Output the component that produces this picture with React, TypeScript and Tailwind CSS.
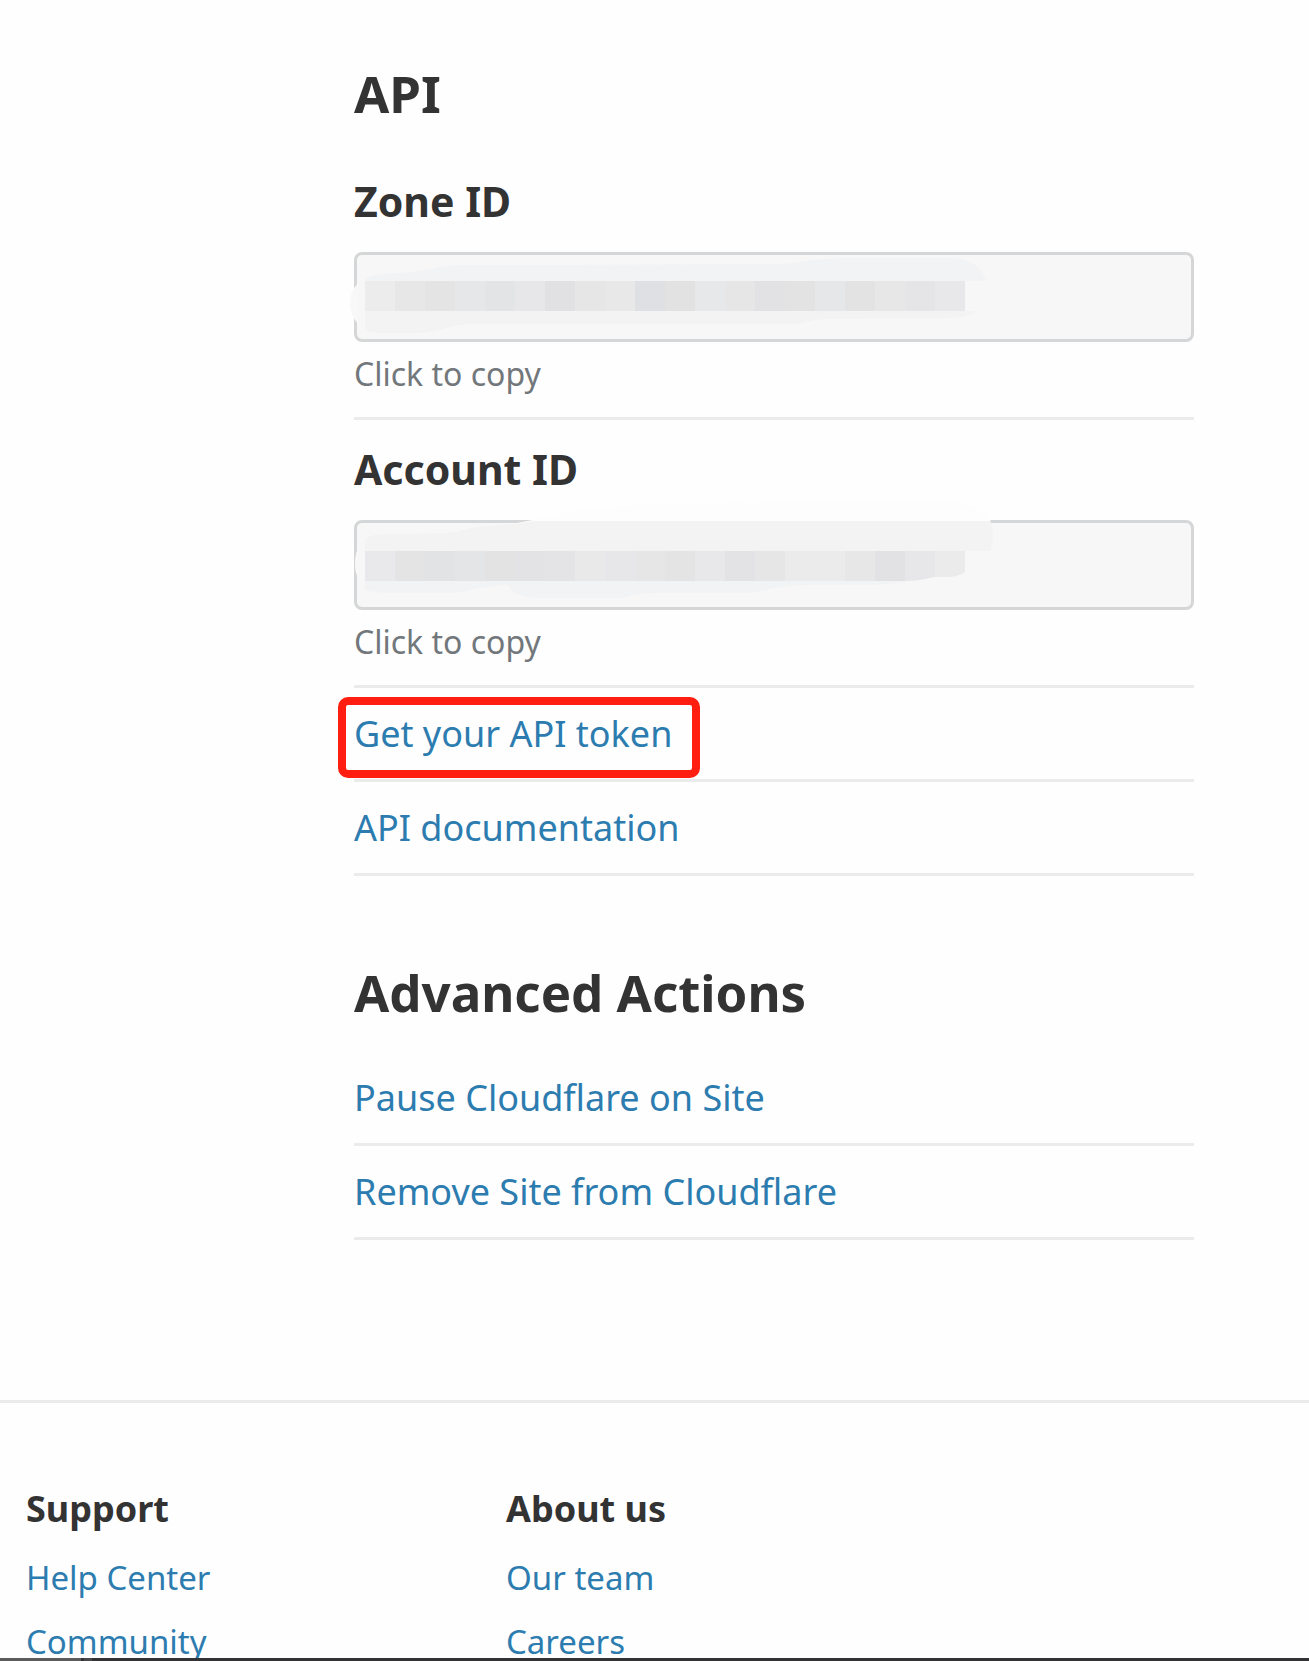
import React from "react";

const CELL = 30;

const zoneCells = [
  "#ececec", "#e7e7e7", "#e4e4e4", "#e5e7e9", "#e3e4e6", "#e7e7e9", "#e1e1e4", "#e6e6e6", "#e8e8e8", "#dfe0e3",
  "#e2e2e2", "#e6e8ea", "#e6e6e6", "#e2e2e5", "#e3e3e3", "#e5e7e9", "#e3e3e3", "#e7e7e7", "#e5e5e8", "#e8e8ea",
];

const accountCells = [
  "#e9e9eb", "#e4e4e4", "#e2e3e5", "#e3e5e7", "#e3e3e3", "#e3e3e6", "#e4e4e7", "#e9e9e9", "#e7e7e9", "#e6e6e6",
  "#e4e4e4", "#e8e8ea", "#e3e3e6", "#e6e6e6", "#ebebeb", "#ebebeb", "#e7e7e7", "#e2e2e5", "#e7e7ea", "#ebebeb",
];

function Cells({ colors, y }: { colors: string[]; y: number }) {
  return (
    <>
      {colors.map((c, i) => (
        <rect key={i} x={11 + i * CELL} y={y} width={CELL} height={CELL} fill={c} />
      ))}
    </>
  );
}

function ZoneMosaic() {
  return (
    <svg className="pointer-events-none absolute inset-0 h-full w-full overflow-visible" aria-hidden="true">
      <path d="M4 31 Q-4 40 -4 51 Q-4 63 4 72 Z" fill="#f8f8f8" />
      <path d="M11 29 V26 Q20 22 45 21 Q70 19 85 15 Q95 13 115 13 L430 12 Q460 7 490 6 H600 Q626 8 632 29 Z" fill="#f2f3f5" />
      <path d="M11 59 V78 Q14 81 30 81 H63 Q80 80 93 76 Q105 72 119 72 H443 Q460 67 479 67 L600 66 Q615 65 623 59 Z" fill="#f3f3f3" />
      <Cells colors={zoneCells} y={29} />
    </svg>
  );
}

function AccountMosaic() {
  return (
    <svg className="pointer-events-none absolute inset-0 h-full w-full overflow-visible" aria-hidden="true">
      <defs>
        <clipPath id="account-cells">
          <path d="M11 31 H611 V52 Q604 57 593 57 H580 Q565 61 553 61 H11 Z" />
        </clipPath>
      </defs>
      <path d="M4 28 Q1 35 1 44 Q1 52 4 58 Z" fill="#f8f8f8" />
      <path d="M163 3 Q185 -1 199 -4 Q225 -12 259 -13 Q310 -17 353 -17 L426 -18 H599 Q632 -13 637 2 Z" fill="#fdfdfd" />
      <path d="M11 31 V20 Q16 14 30 14 Q80 14 102 12 Q118 7 132 6 Q155 5 180 1 H636 Q642 15 636 31 Z" fill="#f3f3f3" />
      <path d="M11 61 V70 Q20 73 40 73 H102 Q130 66 154 65 Q160 77 180 78 H269 Q285 73 302 73 H396 Q426 66 452 65 H519 Q540 64 553 61 Z" fill="#f2f3f5" />
      <g clipPath="url(#account-cells)">
        <Cells colors={accountCells} y={31} />
      </g>
    </svg>
  );
}

function IdField({ id, label, mosaic }: { id: string; label: string; mosaic: React.ReactNode }) {
  return (
    <div className="border-b-3 border-[#ebebeb] pb-[21px]">
      <label htmlFor={id} className="block text-[41px] leading-[52px] font-bold">
        {label}
      </label>
      <div className="relative mt-[25px]">
        <input
          id={id}
          type="text"
          readOnly
          className="block h-[90px] w-full rounded-lg border-3 border-[#d5d6d7] bg-[#f7f7f7] px-3 outline-none"
        />
        {mosaic}
      </div>
      <button type="button" className="mt-[10px] block text-[32px] leading-[44px] text-[#72777b]">
        Click to copy
      </button>
    </div>
  );
}

function ActionLink({ children, marked = false }: { children: string; marked?: boolean }) {
  return (
    <li className="relative border-b-3 border-[#ebebeb] pt-5 pb-[19px]">
      <a href="#" className="block text-[36px] leading-[52px] text-[#2c7cb0]">
        {children}
      </a>
      {marked && (
        <span className="pointer-events-none absolute top-[9px] -left-4 h-[81px] w-[362px] rounded-[10px] border-8 border-[#ff1e10]" />
      )}
    </li>
  );
}

function FooterColumn({ title, links }: { title: string; links: string[] }) {
  return (
    <nav aria-label={title} className="w-[480px]">
      <h3 className="text-[36px] leading-[52px] font-bold">{title}</h3>
      <ul className="mt-[11px]">
        {links.map((l) => (
          <li key={l}>
            <a href="#" className="block text-[33px] leading-[64px] text-[#2c7cb0]">
              {l}
            </a>
          </li>
        ))}
      </ul>
    </nav>
  );
}

export default function App() {
  return (
    <div className="flex h-screen flex-col bg-[#fefefe] font-['Segoe_UI','Noto_Sans',sans-serif] text-[#333333]">
      <div className="min-h-0 flex-1 overflow-hidden">
        <main className="pt-[61px] pr-[115px] pb-40 pl-[354px]">
          <section>
            <h2 className="text-[51px] leading-[64px] font-bold">API</h2>
            <div className="mt-[50px] flex flex-col gap-[23px]">
              <IdField id="zone-id" label="Zone ID" mosaic={<ZoneMosaic />} />
              <IdField id="account-id" label="Account ID" mosaic={<AccountMosaic />} />
            </div>
            <ul>
              <ActionLink marked>Get your API token</ActionLink>
              <ActionLink>API documentation</ActionLink>
            </ul>
          </section>
          <section className="mt-[84px]">
            <h2 className="text-[51px] leading-[64px] font-bold">Advanced Actions</h2>
            <ul className="mt-[28px]">
              <ActionLink>Pause Cloudflare on Site</ActionLink>
              <ActionLink>Remove Site from Cloudflare</ActionLink>
            </ul>
          </section>
        </main>
        <footer className="flex border-t-3 border-[#ebebeb] pt-20 pl-[26px]">
          <FooterColumn title="Support" links={["Help Center", "Community"]} />
          <FooterColumn title="About us" links={["Our team", "Careers"]} />
        </footer>
      </div>
      <div className="flex h-[3px] shrink-0 bg-[#323234]">
        <div className="w-[81px] bg-[#5b5b5b]" />
        <div className="ml-[3px] w-2 bg-[#48484a]" />
      </div>
    </div>
  );
}
